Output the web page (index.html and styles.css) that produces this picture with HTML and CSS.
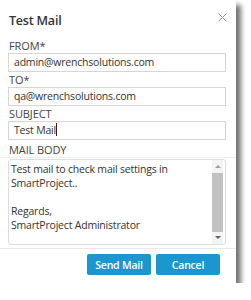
FILE: index.html
```html
<!DOCTYPE html>
<html lang="en">
<head>
    <meta charset="UTF-8">
    <meta name="viewport" content="width=device-width, initial-scale=1.0">
    <title>Test Mail</title>
    <link rel="stylesheet" href="styles.css">
</head>
<body>
    <div class="dialog">
        <div class="header">
            <h1 class="title">Test Mail</h1>
            <span class="close">
                <svg width="9" height="9" viewBox="0 0 9 9"><path d="M0.5 0.5L8.5 8.5M8.5 0.5L0.5 8.5" stroke="#9a9a9a" stroke-width="1"/></svg>
            </span>
        </div>

        <div class="fields">
            <label class="label">FROM*</label>
            <div class="input">admin@wrenchsolutions.com</div>
            <label class="label">TO*</label>
            <div class="input">qa@wrenchsolutions.com</div>
            <label class="label">SUBJECT</label>
            <div class="input">Test Mail<span class="caret"></span></div>
            <label class="label label-body">MAIL BODY</label>
        </div>

        <div class="body-section">
            <div class="mail-body">
                <div class="mail-text">Test mail to check mail settings in<br>SmartProject..<br><br>Regards,<br>SmartProject Administrator</div>
                <div class="scrollbar">
                    <span class="arrow up"></span>
                    <span class="thumb"></span>
                    <span class="arrow down"></span>
                </div>
            </div>
        </div>

        <div class="footer">
            <button class="btn">Send Mail</button>
            <button class="btn">Cancel</button>
        </div>
    </div>
</body>
</html>
```

FILE: styles.css
```css
body {
    margin: 0;
    background: #fff;
    font-family: "Open Sans", Arial, sans-serif;
    color: #333;
}
.dialog {
    width: 236px;
    height: 283px;
    background: #fff;
    box-shadow: 5px 5px 5px rgba(0, 0, 0, 0.55);
    display: flex;
    flex-direction: column;
}
.header {
    display: flex;
    justify-content: space-between;
    align-items: flex-start;
    padding: 12px 9px 0 9px;
    height: 26px;
}
.title {
    margin: 0;
    font-size: 12.5px;
    font-weight: 600;
    letter-spacing: -0.2px;
    line-height: 18px;
    color: #333;
}
.close {
    margin-top: 1px;
    line-height: 0;
}
.fields {
    display: flex;
    flex-direction: column;
    padding: 0 10px 0 8px;
}
.label {
    font-size: 11px;
    line-height: 15px;
    letter-spacing: -0.1px;
    color: #444;
    padding-left: 1px;
}
.label-body {
    margin-top: 2px;
}
.input {
    height: 19px;
    box-sizing: border-box;
    border: 1px solid #d6d6d6;
    font-size: 10.5px;
    letter-spacing: -0.2px;
    line-height: 17px;
    padding-left: 5px;
    color: #333;
}
.caret {
    display: inline-block;
    width: 1px;
    height: 13px;
    background: #222;
    vertical-align: -2px;
}
.body-section {
    border-top: 1px solid #eee;
    border-bottom: 1px solid #e8e8e8;
    padding: 0 10px 3px 8px;
}
.mail-body {
    height: 84px;
    border: 1px solid #ddd;
    border-radius: 3px;
    display: flex;
    margin-top: 1px;
}
.mail-text {
    flex: 1;
    font-size: 10.5px;
    letter-spacing: -0.2px;
    line-height: 14px;
    padding: 2px 0 0 2px;
    color: #333;
}
.scrollbar {
    width: 11px;
    margin-right: 2px;
    display: flex;
    flex-direction: column;
    align-items: center;
    background: #f4f4f4;
}
.arrow {
    width: 0;
    height: 0;
    border-left: 3px solid transparent;
    border-right: 3px solid transparent;
}
.arrow.up {
    border-bottom: 3px solid #a0a0a0;
    margin: 5px 0 5px;
}
.arrow.down {
    border-top: 3px solid #606060;
    margin: 4px 0 0;
}
.thumb {
    width: 11px;
    height: 59px;
    background: #c2c2c2;
}
.footer {
    display: flex;
    justify-content: flex-end;
    gap: 5px;
    padding: 5px 16px 0 0;
}
.btn {
    width: 64px;
    height: 21px;
    border: none;
    border-radius: 2px;
    background: #1b97cf;
    color: #fff;
    font-family: "Open Sans", Arial, sans-serif;
    font-weight: 600;
    font-size: 10.5px;
    letter-spacing: -0.2px;
    padding: 0;
    cursor: pointer;
}
```
